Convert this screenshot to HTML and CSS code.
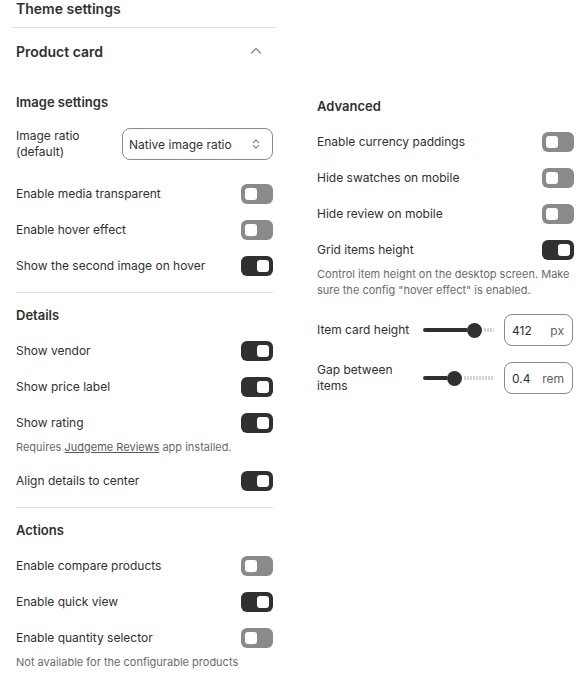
FILE: index.html
```html
<!DOCTYPE html>
<html lang="en">
<head>
    <meta charset="UTF-8">
    <meta name="viewport" content="width=device-width, initial-scale=1.0">
    <title>Theme settings</title>
    <link rel="stylesheet" href="styles.css">
</head>
<body>
    <div class="panel">
        <div class="panel-title">Theme settings</div>

        <div class="card-head">
            <span>Product card</span>
            <!-- collapse chevron -->
            <svg class="chevron" width="12" height="8" viewBox="0 0 12 8">
                <path d="M1.5 6l4.5-4.5 4.5 4.5" fill="none" stroke="#8a8a8a" stroke-width="1.4" stroke-linecap="round" stroke-linejoin="round"/>
            </svg>
        </div>

        <div class="columns">
            <div class="col">
                <section class="group">
                    <h3>Image settings</h3>
                    <div class="field field-select">
                        <label for="ratio">Image ratio (default)</label>
                        <div class="select" id="ratio">
                            <span>Native image ratio</span>
                            <svg width="12" height="14" viewBox="0 0 12 14">
                                <path d="M3.3 5.6l2.7-2.7 2.7 2.7M3.3 8.4l2.7 2.7 2.7-2.7" fill="none" stroke="#8a8a8a" stroke-width="1.2" stroke-linecap="round" stroke-linejoin="round"/>
                            </svg>
                        </div>
                    </div>
                    <div class="row"><span>Enable media transparent</span><span class="toggle"></span></div>
                    <div class="row"><span>Enable hover effect</span><span class="toggle"></span></div>
                    <div class="row"><span>Show the second image on hover</span><span class="toggle on"></span></div>
                </section>

                <section class="group">
                    <h3>Details</h3>
                    <div class="row"><span>Show vendor</span><span class="toggle on"></span></div>
                    <div class="row"><span>Show price label</span><span class="toggle on"></span></div>
                    <div class="row"><span>Show rating</span><span class="toggle on"></span></div>
                    <p class="help">Requires <a href="#">Judgeme Reviews</a> app installed.</p>
                    <div class="row"><span>Align details to center</span><span class="toggle on"></span></div>
                </section>

                <section class="group">
                    <h3>Actions</h3>
                    <div class="row"><span>Enable compare products</span><span class="toggle"></span></div>
                    <div class="row"><span>Enable quick view</span><span class="toggle on"></span></div>
                    <div class="row"><span>Enable quantity selector</span><span class="toggle"></span></div>
                    <p class="help">Not available for the configurable products</p>
                </section>
            </div>

            <div class="col col-right">
                <section class="group">
                    <h3>Advanced</h3>
                    <div class="row"><span>Enable currency paddings</span><span class="toggle"></span></div>
                    <div class="row"><span>Hide swatches on mobile</span><span class="toggle"></span></div>
                    <div class="row"><span>Hide review on mobile</span><span class="toggle"></span></div>
                    <div class="row"><span>Grid items height</span><span class="toggle on"></span></div>
                    <p class="help">Control item height on the desktop screen. Make sure the config "hover effect" is enabled.</p>

                    <div class="field field-range">
                        <label>Item card height</label>
                        <div class="slider">
                            <span class="fill" style="width: 44px"></span>
                            <span class="thumb"></span>
                            <span class="rest"></span>
                        </div>
                        <div class="num-input"><span>412</span><span class="unit">px</span></div>
                    </div>
                    <div class="field field-range">
                        <label>Gap between items</label>
                        <div class="slider">
                            <span class="fill" style="width: 24px"></span>
                            <span class="thumb"></span>
                            <span class="rest"></span>
                        </div>
                        <div class="num-input"><span>0.4</span><span class="unit">rem</span></div>
                    </div>
                </section>
            </div>
        </div>
    </div>
</body>
</html>
```

FILE: styles.css
```css
body {
    margin: 0;
    background: #fff;
    font-family: Inter, "Noto Sans", sans-serif;
    font-size: 12px;
    color: #303030;
}

.panel {
    width: 585px;
}

.panel-title {
    margin-left: 12px;
    width: 260px;
    padding: 0 0 8px 4px;
    margin-top: -1px;
    border-bottom: 1px solid #e3e3e3;
    font-size: 14px;
    font-weight: 600;
    line-height: 20px;
}

.card-head {
    width: 257px;
    margin-left: 16px;
    padding: 14px 0;
    display: flex;
    align-items: center;
    justify-content: space-between;
    font-size: 14px;
    font-weight: 600;
    line-height: 20px;
}
.card-head .chevron {
    margin-right: 11px;
    margin-top: -2px;
}

.columns {
    display: grid;
    grid-template-columns: 257px 257px;
    column-gap: 44px;
    margin: 4px 0 0 16px;
}
.col-right {
    padding-top: 4px;
}

.group {
    display: flex;
    flex-direction: column;
    gap: 16px;
    padding: 12px 0 16px;
}
.group + .group {
    border-top: 1px solid #e3e3e3;
}
.group h3 {
    margin: 0;
    font-size: 13px;
    font-weight: 600;
    line-height: 20px;
}

.row {
    display: flex;
    align-items: center;
    justify-content: space-between;
    height: 20px;
    line-height: 16px;
}

/* switch */
.toggle {
    width: 32px;
    height: 20px;
    box-sizing: border-box;
    padding: 4px;
    border-radius: 6px;
    background: #8a8a8a;
    display: flex;
    justify-content: flex-start;
}
.toggle::after {
    content: "";
    width: 12px;
    height: 12px;
    border-radius: 3px;
    background: #fff;
}
.toggle.on {
    background: #303030;
    justify-content: flex-end;
}

.help {
    margin: -10px 0 0;
    font-size: 11px;
    line-height: 16px;
    color: #6b6b6b;
}
.help a {
    color: #5a5a5a;
    text-decoration: underline;
}

.field {
    display: flex;
    align-items: center;
    gap: 10px;
}
.field label {
    width: 96px;
    flex-shrink: 0;
    line-height: 16px;
}
.field-select {
    margin-bottom: 8px;
}

.select {
    flex: 1;
    height: 32px;
    box-sizing: border-box;
    padding: 0 10px 0 6px;
    border: 1px solid #8a8a8a;
    border-radius: 8px;
    display: flex;
    align-items: center;
    justify-content: space-between;
}

/* range */
.slider {
    width: 71px;
    height: 16px;
    display: flex;
    align-items: center;
    flex-shrink: 0;
}
.slider .fill {
    height: 4px;
    border-radius: 2px 0 0 2px;
    background: #303030;
}
.slider .thumb {
    width: 15px;
    height: 15px;
    border-radius: 50%;
    background: #303030;
    flex-shrink: 0;
}
.slider .rest {
    flex: 1;
    height: 4px;
    margin-left: 2px;
    background: repeating-linear-gradient(to right, #d4d4d4 0 2px, transparent 2px 3px);
}

.num-input {
    width: 69px;
    height: 32px;
    box-sizing: border-box;
    padding: 0 8px 0 7px;
    border: 1px solid #8a8a8a;
    border-radius: 8px;
    display: flex;
    align-items: center;
    justify-content: space-between;
}
.num-input .unit {
    color: #616161;
}
```
